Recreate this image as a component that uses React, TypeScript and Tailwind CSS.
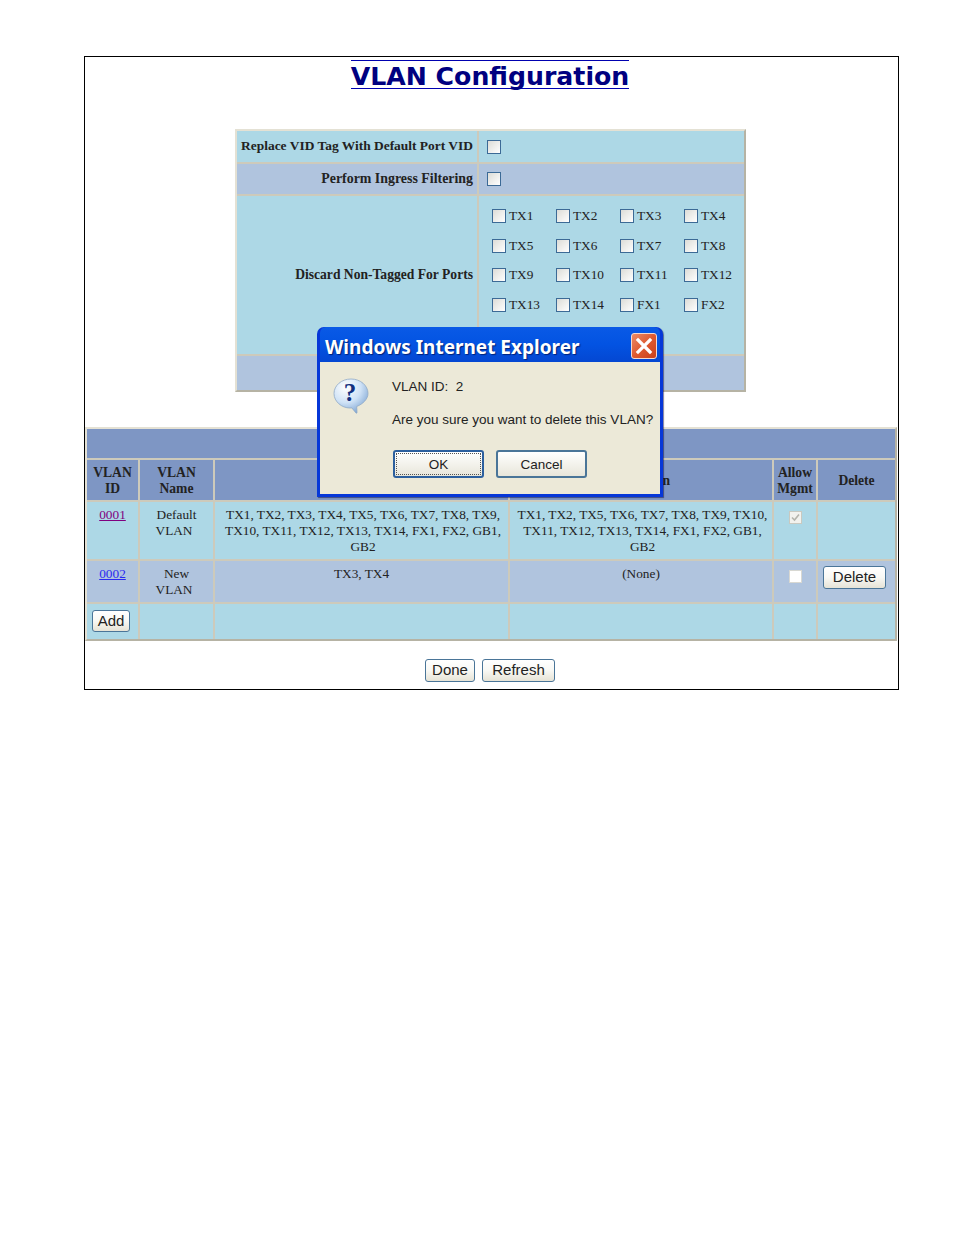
const serif = "font-['Liberation_Serif',serif]";
const sans = "font-['Liberation_Sans',Arial,sans-serif]";

const portRows = [
  ["TX1", "TX2", "TX3", "TX4"],
  ["TX5", "TX6", "TX7", "TX8"],
  ["TX9", "TX10", "TX11", "TX12"],
  ["TX13", "TX14", "FX1", "FX2"],
];

function Check({ className = "" }: { className?: string }) {
  return (
    <input
      type="checkbox"
      readOnly
      className={`m-0 block h-[14px] w-[14px] shrink-0 appearance-none border border-[#3c6a96] bg-gradient-to-br from-[#dcdcd7] to-white ${className}`}
    />
  );
}

function XpButton({ label, className = "" }: { label: string; className?: string }) {
  return (
    <button
      className={`${sans} flex items-center justify-center rounded-[3px] border-[1.5px] border-[#4a7598] bg-gradient-to-b from-white via-[#f8f8f4] to-[#e6e3d6] pb-[2px] text-[15px] leading-none text-[#222] ${className}`}
    >
      {label}
    </button>
  );
}

function QuestionIcon() {
  return (
    <svg width="36" height="36" viewBox="0 0 36 36">
      <defs>
        <radialGradient id="bubble" cx="35%" cy="25%" r="80%">
          <stop offset="0%" stopColor="#ffffff" />
          <stop offset="55%" stopColor="#cfe2f6" />
          <stop offset="100%" stopColor="#7fa6d4" />
        </radialGradient>
      </defs>
      <path
        d="M18 1C8.5 1 1 7.5 1 15.5S8.5 30 17 30c.6 0 1.2 0 1.8-.1L23 35c.5.4 1 .2 1-.5l-.3-6C30 26 35 21 35 15.5 35 7.5 27.5 1 18 1Z"
        fill="url(#bubble)"
        stroke="#8fa9c6"
        strokeWidth="0.8"
      />
      <text
        x="17"
        y="23"
        textAnchor="middle"
        fontFamily="Liberation Serif, serif"
        fontWeight="700"
        fontSize="25"
        fill="#12307f"
      >
        ?
      </text>
    </svg>
  );
}

function Dialog() {
  return (
    <div className="absolute left-[317px] top-[327px] flex h-[170px] w-[346px] flex-col rounded-t-[7px] bg-[#0637d8] px-[3px] pb-[3px] shadow-[1px_1px_1px_rgba(0,0,60,0.5)]">
      <div className="flex h-[35px] shrink-0 items-center justify-between rounded-t-[6px] bg-gradient-to-b from-[#0a5ae6] via-[#0353e2] to-[#0447d2] pl-[5px] pr-[3px]">
        <span className="pt-[5px] font-['Noto_Sans',sans-serif] text-[19px] font-bold leading-none text-white [text-shadow:1px_1px_1px_#00227a]">
          Windows Internet Explorer
        </span>
        <span className="mt-[3px] flex h-[26px] w-[26px] items-center justify-center rounded-[3px] border border-[#f4d9cf] bg-gradient-to-br from-[#ea8a66] via-[#df5a30] to-[#c8401c]">
          <svg width="18" height="18" viewBox="0 0 18 18">
            <path d="M3 3L15 15M15 3L3 15" stroke="white" strokeWidth="3.2" strokeLinecap="square" />
          </svg>
        </span>
      </div>
      <div className={`${sans} flex-1 bg-[#ece9d8] text-[13.5px] leading-none text-[#222]`}>
        <div className="flex h-[75px] pl-[13px] pt-[16px]">
          <QuestionIcon />
          <div className="ml-[23px]">
            <p className="mt-[2px] whitespace-pre">VLAN ID:  2</p>
            <p className="mt-[19px] whitespace-nowrap">Are you sure you want to delete this VLAN?</p>
          </div>
        </div>
        <div className="mt-[13px] flex gap-[12px] pl-[73px]">
          <button className="flex h-[28px] w-[91px] items-center justify-center rounded-[3px] border-2 border-[#2c5f9e] bg-gradient-to-b from-white to-[#e8e6da] pt-[2px] outline-1 -outline-offset-4 outline-dotted outline-[#555]">
            OK
          </button>
          <button className="flex h-[28px] w-[91px] items-center justify-center rounded-[3px] border-2 border-[#4a7598] bg-gradient-to-b from-white to-[#e8e6da] pt-[2px]">
            Cancel
          </button>
        </div>
      </div>
    </div>
  );
}

function TopTable() {
  const label = "whitespace-nowrap pr-[4px] text-right font-bold";
  const line = "border-2 border-[#cdcabb]";
  return (
    <div className="ml-[150px] h-[263px] w-[511px] border-[2px] border-b-[#b6b3a4] border-l-[#e4e1d4] border-r-[#b6b3a4] border-t-[#e4e1d4]">
      <table className={`${serif} h-full w-full table-fixed border-collapse border-hidden text-[#222]`}>
        <colgroup>
          <col className="w-[241px]" />
          <col />
        </colgroup>
        <tbody>
          <tr className="h-[32px] bg-[#add8e6]">
            <td className={`${line} ${label} text-[13.45px]`}>Replace VID Tag With Default Port VID</td>
            <td className={line}>
              <Check className="ml-[8px]" />
            </td>
          </tr>
          <tr className="h-[32px] bg-[#b0c4de]">
            <td className={`${line} ${label} text-[13.9px]`}>Perform Ingress Filtering</td>
            <td className={line}>
              <Check className="ml-[8px]" />
            </td>
          </tr>
          <tr className="h-[160px] bg-[#add8e6]">
            <td className={`${line} ${label} text-[13.6px]`}>Discard Non-Tagged For Ports</td>
            <td className={`${line} align-top`}>
              <div className="grid grid-cols-[64px_64px_64px_64px] pl-[13px] pt-[5px]">
                {portRows.flat().map((port) => (
                  <label key={port} className="flex h-[29.7px] items-center gap-[3px] text-[13.3px]">
                    <Check />
                    {port}
                  </label>
                ))}
              </div>
            </td>
          </tr>
          <tr className="bg-[#b0c4de]">
            <td className={line} />
            <td className={line} />
          </tr>
        </tbody>
      </table>
    </div>
  );
}

function VlanTable() {
  const line = "border-2 border-[#cdcabb]";
  const head = `${line} bg-[#7e96c4] pt-[1px] text-center align-middle text-[13.6px] font-bold leading-[16px]`;
  const cell = `${line} px-[2px] pt-[5px] text-center align-top text-[13.3px] leading-[16px]`;
  const ports = `${line} pl-[5px] pr-[2px] pt-[5px] text-center align-top text-[13.3px] leading-[16px]`;
  return (
    <div className="mt-[35px] h-[214px] w-[812px] border-[2px] border-b-[#b6b3a4] border-l-[#e4e1d4] border-r-[#b6b3a4] border-t-[#e4e1d4]">
      <table className={`${serif} h-full w-full table-fixed border-collapse border-hidden text-[#222]`}>
        <colgroup>
          <col className="w-[52px]" />
          <col className="w-[75px]" />
          <col className="w-[295px]" />
          <col className="w-[264px]" />
          <col className="w-[44px]" />
          <col />
        </colgroup>
        <tbody>
          <tr className="h-[30px]">
            <td colSpan={6} className={`${line} bg-[#7e96c4]`} />
          </tr>
          <tr className="h-[42px]">
            <td className={head}>VLAN<br />ID</td>
            <td className={head}>VLAN<br />Name</td>
            <td className={head}>Members</td>
            <td className={head}>Tagged In</td>
            <td className={head}>Allow<br />Mgmt</td>
            <td className={head}>Delete</td>
          </tr>
          <tr className="h-[59px] bg-[#add8e6]">
            <td className={cell}>
              <a href="#" className="text-[#800080] underline">0001</a>
            </td>
            <td className={cell}>
              Default<br />
              <span className="pr-[5px]">VLAN</span>
            </td>
            <td className={ports}>TX1, TX2, TX3, TX4, TX5, TX6, TX7, TX8, TX9, TX10, TX11, TX12, TX13, TX14, FX1, FX2, GB1, GB2</td>
            <td className={ports}>TX1, TX2, TX5, TX6, TX7, TX8, TX9, TX10, TX11, TX12, TX13, TX14, FX1, FX2, GB1, GB2</td>
            <td className={`${line} pt-[9px] align-top`}>
              <span className="mx-auto flex h-[13px] w-[13px] items-center justify-center border border-[#c9c9c0] bg-[#f2f2ee]">
                <svg width="11" height="11" viewBox="0 0 11 11">
                  <path d="M2 5.5L4.5 8L9 2.5" fill="none" stroke="#b4b4ac" strokeWidth="1.6" />
                </svg>
              </span>
            </td>
            <td className={line} />
          </tr>
          <tr className="h-[43px] bg-[#b0c4de]">
            <td className={cell}>
              <a href="#" className="text-[#2a2af0] underline">0002</a>
            </td>
            <td className={cell}>
              New<br />
              <span className="pr-[5px]">VLAN</span>
            </td>
            <td className={cell}>TX3, TX4</td>
            <td className={cell}>(None)</td>
            <td className={`${line} pt-[9px] align-top`}>
              <span className="mx-auto block h-[13px] w-[13px] border border-[#d8d8d2] bg-white" />
            </td>
            <td className={`${line} pt-[5px] align-top`}>
              <XpButton label="Delete" className="ml-[5px] h-[23px] w-[63px]" />
            </td>
          </tr>
          <tr className="h-[36px] bg-[#add8e6]">
            <td className={line}>
              <XpButton label="Add" className="mb-[1px] ml-[5px] h-[22px] w-[38px]" />
            </td>
            <td className={line} />
            <td className={line} />
            <td className={line} />
            <td className={line} />
            <td className={line} />
          </tr>
        </tbody>
      </table>
    </div>
  );
}

export default function App() {
  return (
    <div className="relative h-[1235px] w-[954px] bg-white">
      <div className="absolute left-[84px] top-[56px] h-[634px] w-[815px] border border-black">
        <div className="flex h-[72px] justify-center pr-[3px] pt-[3px]">
          <h1 className="h-[29px] border-y border-[#0000b0] font-['DejaVu_Sans',sans-serif] text-[25.2px] font-bold leading-[31px] text-[#000080]">
            VLAN Configuration
          </h1>
        </div>
        <TopTable />
        <VlanTable />
        <div className="mt-[18px] flex justify-center gap-[7px] pr-[3px]">
          <XpButton label="Done" className="h-[23px] w-[50px]" />
          <XpButton label="Refresh" className="h-[23px] w-[73px]" />
        </div>
      </div>
      <Dialog />
    </div>
  );
}
